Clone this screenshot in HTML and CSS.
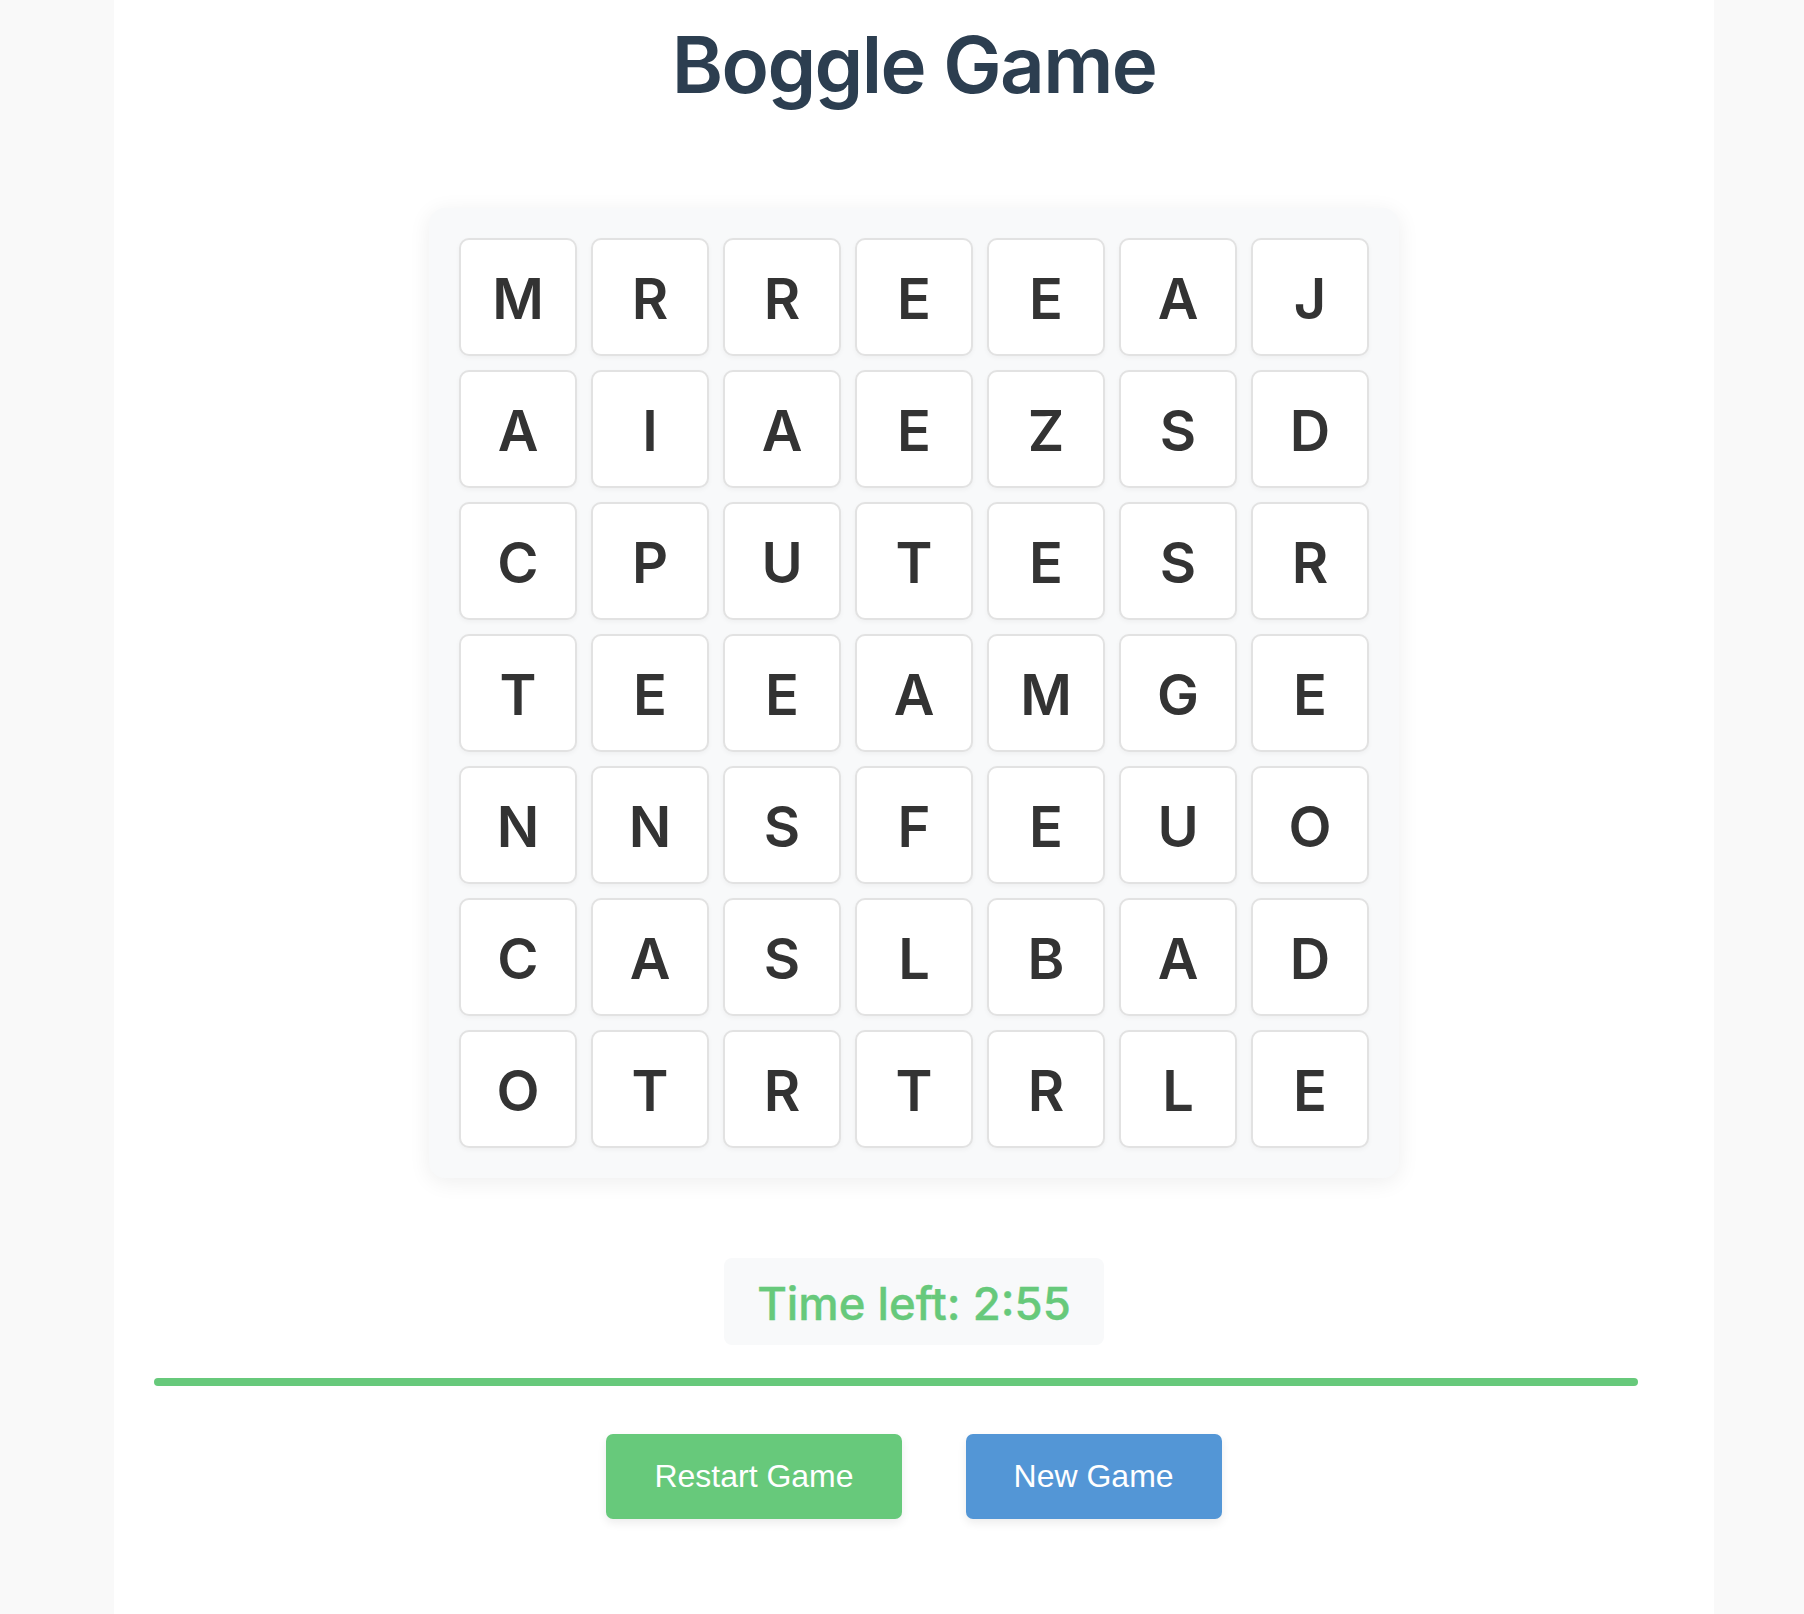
FILE: index.html
```html
<!DOCTYPE html>
<html lang="en">
<head>
<meta charset="utf-8">
<title>Boggle Game</title>
<link rel="stylesheet" href="styles.css">
</head>
<body>
<main class="container">
  <h1 class="title">Boggle Game</h1>
  <div class="board">
    <div class="grid">
      <div class="tile">M</div><div class="tile">R</div><div class="tile">R</div><div class="tile">E</div><div class="tile">E</div><div class="tile">A</div><div class="tile">J</div>
      <div class="tile">A</div><div class="tile">I</div><div class="tile">A</div><div class="tile">E</div><div class="tile">Z</div><div class="tile">S</div><div class="tile">D</div>
      <div class="tile">C</div><div class="tile">P</div><div class="tile">U</div><div class="tile">T</div><div class="tile">E</div><div class="tile">S</div><div class="tile">R</div>
      <div class="tile">T</div><div class="tile">E</div><div class="tile">E</div><div class="tile">A</div><div class="tile">M</div><div class="tile">G</div><div class="tile">E</div>
      <div class="tile">N</div><div class="tile">N</div><div class="tile">S</div><div class="tile">F</div><div class="tile">E</div><div class="tile">U</div><div class="tile">O</div>
      <div class="tile">C</div><div class="tile">A</div><div class="tile">S</div><div class="tile">L</div><div class="tile">B</div><div class="tile">A</div><div class="tile">D</div>
      <div class="tile">O</div><div class="tile">T</div><div class="tile">R</div><div class="tile">T</div><div class="tile">R</div><div class="tile">L</div><div class="tile">E</div>
    </div>
  </div>
  <div class="timer-row">
    <div class="timer">Time left: 2:55</div>
  </div>
  <div class="progress">
    <div class="progress-fill" style="width: 97.6%"></div>
  </div>
  <div class="actions">
    <button class="btn btn-restart">Restart Game</button>
    <button class="btn btn-new">New Game</button>
  </div>
</main>
</body>
</html>
```

FILE: styles.css
```css
* {
  box-sizing: border-box;
}

html, body {
  margin: 0;
}

body {
  background: #f9f9f9;
  padding-left: 24px;
  font-family: Inter, "Noto Sans", sans-serif;
  min-height: 1614px;
}

.container {
  width: 1600px;
  margin: 0 auto;
  background: #ffffff;
  min-height: 1614px;
  padding: 17px 40px 40px;
  display: flex;
  flex-direction: column;
  align-items: center;
}

.title {
  margin: 0;
  font-size: 78px;
  font-weight: 600;
  line-height: normal;
  color: #2c3e50;
  letter-spacing: -1.6px;
}

.board {
  margin-top: 96px;
  background: #f8f9fa;
  padding: 30px;
  border-radius: 16px;
  box-shadow: 0 4px 22px rgba(0, 0, 0, 0.07);
}

.grid {
  display: grid;
  grid-template-columns: repeat(7, 118px);
  grid-auto-rows: 118px;
  gap: 14px;
}

.tile {
  display: flex;
  align-items: center;
  justify-content: center;
  padding-top: 4px;
  background: #ffffff;
  border: 2px solid #e2e2e2;
  border-radius: 10px;
  box-shadow: 0 2px 5px rgba(0, 0, 0, 0.04);
  font-size: 56px;
  font-weight: 600;
  color: #333333;
}

.timer-row {
  margin-top: 80px;
  display: flex;
  justify-content: center;
}

.timer {
  background: #f8f9fa;
  border-radius: 8px;
  padding: 18px 33px 14px;
  font-size: 45.5px;
  font-weight: 500;
  line-height: normal;
  color: #67c97b;
  -webkit-text-stroke: 0.4px #67c97b;
}

.progress {
  align-self: stretch;
  margin-top: 33px;
  height: 8px;
}

.progress-fill {
  height: 100%;
  background: #67c97b;
  border-radius: 4px;
}

.actions {
  margin-top: 48px;
  display: flex;
  gap: 64px;
  justify-content: center;
}

.btn {
  font-family: "Liberation Sans", Arial, sans-serif;
  font-size: 32px;
  line-height: normal;
  color: #ffffff;
  border: none;
  border-radius: 7px;
  padding: 24px 48px;
  box-shadow: 0 4px 10px rgba(0, 0, 0, 0.08);
  cursor: pointer;
}

.btn-restart {
  background: #67c97b;
}

.btn-new {
  background: #5396d6;
}
```
